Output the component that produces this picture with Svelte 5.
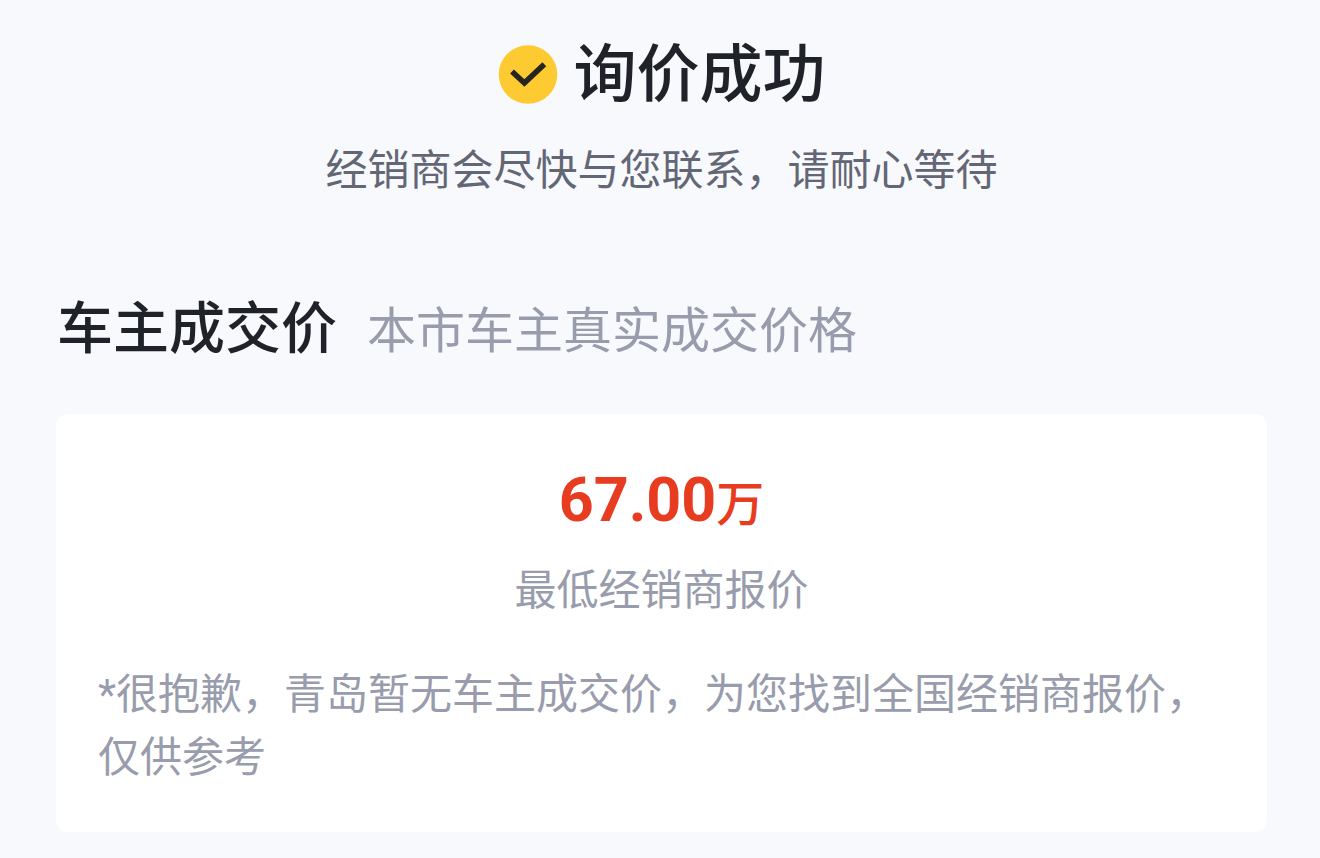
<script lang="ts">
	let {
		city = '青岛',
		price = 67
	}: {
		city?: string;
		price?: number;
	} = $props();

	const priceText = $derived(price.toFixed(2));
</script>

<main class="page">
	<header class="result">
		<h1 class="title">
			<svg class="check" viewBox="0 0 60 60" aria-hidden="true">
				<circle cx="30" cy="29.5" r="29.3" fill="#fdcb31" />
				<path d="M14 26.5 L26.4 38 L46.3 19.2" fill="none" stroke="#25241f" stroke-width="5.6" />
			</svg>
			<span>询价成功</span>
		</h1>
		<p class="tip">经销商会尽快与您联系，请耐心等待</p>
	</header>

	<section>
		<div class="heading">
			<h2>车主成交价</h2>
			<span class="sub">本市车主真实成交价格</span>
		</div>
		<div class="card">
			<p class="price">{priceText}<span class="unit">万</span></p>
			<p class="label">最低经销商报价</p>
			<p class="note">*很抱歉，{city}暂无车主成交价，为您找到全国经销商报价，仅供参考</p>
		</div>
	</section>
</main>

<style>
	:global(body) {
		margin: 0;
		background: #f8f9fd;
	}
	.page {
		padding: 41px 53px 26px 56px;
		font-family: Roboto, 'Noto Sans CJK SC', sans-serif;
		color: #1f2229;
	}
	h1,
	h2,
	p {
		margin: 0;
		font-weight: 500;
	}
	.result {
		text-align: center;
	}
	.title {
		display: flex;
		align-items: center;
		justify-content: center;
		gap: 16px;
		font-size: 63px;
		line-height: 68px;
	}
	.check {
		width: 60px;
		height: 60px;
	}
	.tip {
		margin-top: 30px;
		font-size: 42px;
		line-height: 63px;
		font-weight: 400;
		color: #636674;
	}
	.heading {
		display: flex;
		align-items: baseline;
		gap: 30px;
		margin: 87px 0 42px;
		padding-left: 1px;
		line-height: 80px;
	}
	h2 {
		font-size: 56px;
	}
	.sub {
		font-size: 49px;
		color: #989cac;
	}
	.card {
		padding: 48px 42px 43px;
		border-radius: 12px;
		background: #fff;
	}
	.price {
		font-family: 'DIN Alternate', Roboto, 'Noto Sans CJK SC', sans-serif;
		font-size: 61px;
		line-height: 76px;
		font-weight: 700;
		text-align: center;
		color: #e73c20;
	}
	.unit {
		font-size: 48px;
		font-weight: 500;
	}
	.label,
	.note {
		font-size: 42px;
		line-height: 63px;
		font-weight: 400;
		color: #989cac;
	}
	.label {
		margin: 16px 0 41px;
		text-align: center;
	}
</style>
